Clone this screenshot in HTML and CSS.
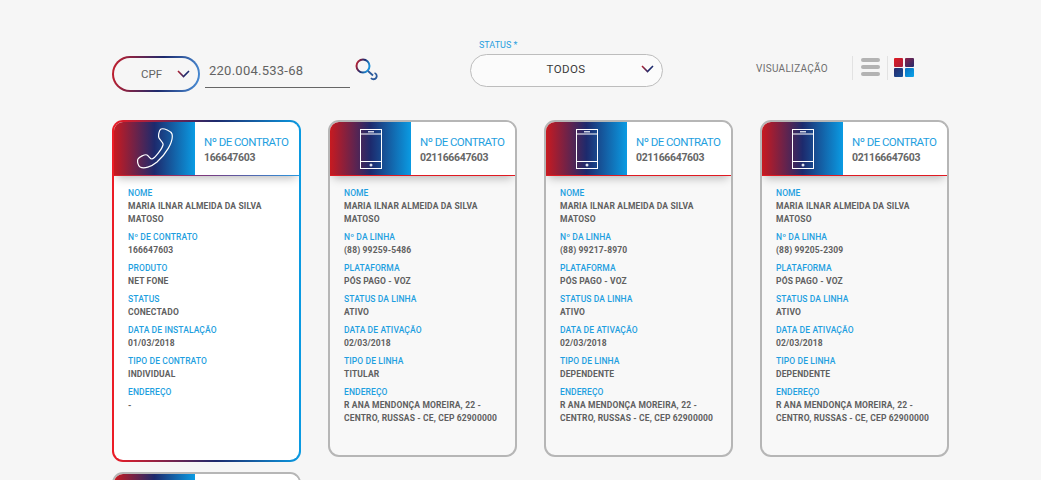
FILE: index.html
```html
<!DOCTYPE html>
<html lang="pt-BR">
<head>
<meta charset="utf-8">
<title>Contratos</title>
<link rel="stylesheet" href="styles.css">
</head>
<body>
<svg class="defs" width="0" height="0" aria-hidden="true">
  <defs>
    <linearGradient id="brand" x1="0" y1="0" x2="1" y2="0.4">
      <stop offset="0" stop-color="#d81f26"/>
      <stop offset=".55" stop-color="#1d2a6d"/>
      <stop offset="1" stop-color="#1a8fd8"/>
    </linearGradient>
    <linearGradient id="chev" x1="0" y1="0" x2="1" y2="0">
      <stop offset="0" stop-color="#b01f2e"/>
      <stop offset=".6" stop-color="#1d2a6d"/>
      <stop offset="1" stop-color="#1d2a6d"/>
    </linearGradient>
    <symbol id="i-handset" viewBox="0 0 36 41">
      <path d="M24 1C27 0 34 3 35 6C37 14 28 27 20 34C14 39 7 41 3 39C1 38 0 33 1 31C2 29 8 26 10 27C12 28 13 31 15 31C18 30 25 21 26 17C27 15 23 12 22 10C21 8 22 2 24 1Z" fill="none" stroke="#fff" stroke-width="1.2"/>
    </symbol>
    <symbol id="i-mobile" viewBox="0 0 22 40">
      <g fill="none" stroke="#fff" stroke-width="1">
        <rect x=".5" y=".5" width="21" height="39"/>
        <path d="M.5 5h21M.5 32.500h21"/>
      </g>
      <rect x="8" y="2" width="6" height="1.500" fill="#cfd3e4"/>
      <circle cx="11" cy="36" r="1.500" fill="#dfe3ee"/>
    </symbol>
  </defs>
</svg>

<header class="toolbar">
  <div class="doc-pill">
    <span class="doc-type">CPF</span>
    <svg class="chev" width="13" height="8" viewBox="0 0 13 8"><path d="M1 1l5.500 5.500L12 1" fill="none" stroke="url(#chev)" stroke-width="1.600"/></svg>
  </div>
  <div class="doc-number">220.004.533-68</div>
  <svg class="search" width="26" height="26" viewBox="0 0 26 26">
    <circle cx="8" cy="8" r="6.500" fill="none" stroke="url(#brand)" stroke-width="2"/>
    <path d="M13 13l5 4.500M19.500 15a3.200 3.200 0 1 1-3.500 5" fill="none" stroke="#2b5a9c" stroke-width="1.800"/>
  </svg>
  <div class="status">
    <span class="status-label">STATUS *</span>
    <div class="status-pill">
      <span class="status-value">TODOS</span>
      <svg class="chev" width="13" height="8" viewBox="0 0 13 8"><path d="M1 1l5.500 5.500L12 1" fill="none" stroke="url(#chev)" stroke-width="1.600"/></svg>
    </div>
  </div>
  <span class="view-label">VISUALIZAÇÃO</span>
  <span class="divider first"></span>
  <span class="list-icon"><i></i><i></i><i></i></span>
  <span class="divider"></span>
  <span class="grid-icon"><i class="q1"></i><i class="q2"></i><i class="q3"></i><i class="q4"></i></span>
</header>

<main class="cards">
  <article class="card selected">
    <div class="card-head">
      <div class="head-icon"><svg class="handset"><use href="#i-handset"/></svg></div>
      <div class="head-text"><span class="head-label">Nº DE CONTRATO</span><strong class="head-value">166647603</strong></div>
    </div>
    <dl class="fields">
      <div><dt>NOME</dt><dd>MARIA ILNAR ALMEIDA DA SILVA MATOSO</dd></div>
      <div><dt>Nº DE CONTRATO</dt><dd>166647603</dd></div>
      <div><dt>PRODUTO</dt><dd>NET FONE</dd></div>
      <div><dt>STATUS</dt><dd>CONECTADO</dd></div>
      <div><dt>DATA DE INSTALAÇÃO</dt><dd>01/03/2018</dd></div>
      <div><dt>TIPO DE CONTRATO</dt><dd>INDIVIDUAL</dd></div>
      <div><dt>ENDEREÇO</dt><dd>-</dd></div>
    </dl>
  </article>

  <article class="card">
    <div class="card-head">
      <div class="head-icon"><svg class="mobile"><use href="#i-mobile"/></svg></div>
      <div class="head-text"><span class="head-label">Nº DE CONTRATO</span><strong class="head-value">021166647603</strong></div>
    </div>
    <dl class="fields">
      <div><dt>NOME</dt><dd>MARIA ILNAR ALMEIDA DA SILVA MATOSO</dd></div>
      <div><dt>Nº DA LINHA</dt><dd>(88) 99259-5486</dd></div>
      <div><dt>PLATAFORMA</dt><dd>PÓS PAGO - VOZ</dd></div>
      <div><dt>STATUS DA LINHA</dt><dd>ATIVO</dd></div>
      <div><dt>DATA DE ATIVAÇÃO</dt><dd>02/03/2018</dd></div>
      <div><dt>TIPO DE LINHA</dt><dd>TITULAR</dd></div>
      <div><dt>ENDEREÇO</dt><dd>R ANA MENDONÇA MOREIRA, 22 - CENTRO, RUSSAS - CE, CEP 62900000</dd></div>
    </dl>
  </article>

  <article class="card">
    <div class="card-head">
      <div class="head-icon"><svg class="mobile"><use href="#i-mobile"/></svg></div>
      <div class="head-text"><span class="head-label">Nº DE CONTRATO</span><strong class="head-value">021166647603</strong></div>
    </div>
    <dl class="fields">
      <div><dt>NOME</dt><dd>MARIA ILNAR ALMEIDA DA SILVA MATOSO</dd></div>
      <div><dt>Nº DA LINHA</dt><dd>(88) 99217-8970</dd></div>
      <div><dt>PLATAFORMA</dt><dd>PÓS PAGO - VOZ</dd></div>
      <div><dt>STATUS DA LINHA</dt><dd>ATIVO</dd></div>
      <div><dt>DATA DE ATIVAÇÃO</dt><dd>02/03/2018</dd></div>
      <div><dt>TIPO DE LINHA</dt><dd>DEPENDENTE</dd></div>
      <div><dt>ENDEREÇO</dt><dd>R ANA MENDONÇA MOREIRA, 22 - CENTRO, RUSSAS - CE, CEP 62900000</dd></div>
    </dl>
  </article>

  <article class="card">
    <div class="card-head">
      <div class="head-icon"><svg class="mobile"><use href="#i-mobile"/></svg></div>
      <div class="head-text"><span class="head-label">Nº DE CONTRATO</span><strong class="head-value">021166647603</strong></div>
    </div>
    <dl class="fields">
      <div><dt>NOME</dt><dd>MARIA ILNAR ALMEIDA DA SILVA MATOSO</dd></div>
      <div><dt>Nº DA LINHA</dt><dd>(88) 99205-2309</dd></div>
      <div><dt>PLATAFORMA</dt><dd>PÓS PAGO - VOZ</dd></div>
      <div><dt>STATUS DA LINHA</dt><dd>ATIVO</dd></div>
      <div><dt>DATA DE ATIVAÇÃO</dt><dd>02/03/2018</dd></div>
      <div><dt>TIPO DE LINHA</dt><dd>DEPENDENTE</dd></div>
      <div><dt>ENDEREÇO</dt><dd>R ANA MENDONÇA MOREIRA, 22 - CENTRO, RUSSAS - CE, CEP 62900000</dd></div>
    </dl>
  </article>

  <article class="card">
    <div class="card-head">
      <div class="head-icon"></div>
      <div class="head-text"></div>
    </div>
  </article>
</main>
</body>
</html>
```
FILE: styles.css
```css
* { box-sizing: border-box; }

html, body {
  height: 480px;
  overflow: hidden;
}

body {
  margin: 0;
  background: #f6f6f6;
  font-family: Roboto, "Liberation Sans", sans-serif;
  color: #636363;
}

.defs { position: absolute; }

.toolbar {
  display: flex;
  align-items: flex-start;
  height: 120px;
  padding: 40px 0 0 112px;
}

.doc-pill {
  display: flex;
  align-items: center;
  width: 88px;
  height: 36px;
  margin-top: 16px;
  padding: 0 8px 0 27px;
  border: 2px solid transparent;
  border-radius: 18px;
  background: linear-gradient(#f6f6f6, #f6f6f6) padding-box,
    linear-gradient(100deg, #c81e2a 0%, #1d2a6d 55%, #4a90d9 100%) border-box;
}

.doc-type {
  flex: 1;
  font-size: 11.500px;
  letter-spacing: 0;
}

.doc-number {
  width: 145px;
  height: 32px;
  margin: 16px 0 0 5px;
  padding: 6px 0 0 4px;
  border-bottom: 1px solid #666;
  font-size: 13px;
  letter-spacing: .25px;
  line-height: 18px;
}

.search {
  margin: 18px 0 0 5px;
}

.status {
  display: flex;
  flex-direction: column;
  width: 193px;
  margin-left: 89px;
}

.status-label {
  height: 14px;
  padding-left: 9px;
  color: #2a9fdf;
  font-size: 9px;
  line-height: 11px;
  letter-spacing: 0;
}

.status-pill {
  display: flex;
  align-items: center;
  height: 33px;
  padding: 0 8px 3px 0;
  border: 1px solid #bdbdbd;
  border-radius: 17px;
  background: #fbfbfb;
}

.status-value {
  flex: 1;
  padding-left: 20px;
  color: #3a3a3a;
  font-size: 11.500px;
  letter-spacing: .4px;
  text-align: center;
}

.view-label {
  margin: 23px 0 0 93px;
  color: #6e6e6e;
  font-size: 10px;
  line-height: 12px;
  letter-spacing: .3px;
}

.divider {
  width: 1px;
  height: 24px;
  margin: 16px 0 0 7px;
  background: #e2e2e2;
}

.divider.first { margin-left: 24px; }

.list-icon {
  display: flex;
  flex-direction: column;
  gap: 3px;
  width: 19px;
  margin: 18px 0 0 8px;
}

.list-icon i {
  display: block;
  height: 4px;
  border-radius: 2px;
  background: #b3b3b3;
}

.grid-icon {
  display: grid;
  grid-template-columns: 9px 9px;
  gap: 1px 2px;
  margin: 18px 0 0 6px;
}

.grid-icon i { display: block; height: 9px; border-radius: 1px; }
.q1 { background: linear-gradient(135deg, #e01a22, #a51f3c); }
.q2 { background: linear-gradient(135deg, #8a2148, #232a6c); }
.q3 { background: linear-gradient(135deg, #2a2a6a, #14509a); }
.q4 { background: linear-gradient(135deg, #0a6fc0, #0aa5ea); }

.cards {
  display: grid;
  grid-template-columns: repeat(4, 189px);
  align-items: start;
  column-gap: 27px;
  row-gap: 10px;
  padding-left: 112px;
}

.card {
  height: 337px;
  overflow: hidden;
  border: 2px solid #b6b6b6;
  border-radius: 11px;
  background: #f8f8f8;
}

.card.selected {
  height: 342px;
  border-color: transparent;
  background: linear-gradient(#fff, #fff) padding-box,
    linear-gradient(90deg, #ee1c25 0%, #1d2a6d 55%, #0a9be3 100%) border-box;
}

.card-head {
  display: flex;
  height: 54px;
  border-bottom: 1px solid #e01a22;
  background: #fff;
  box-shadow: 0 5px 9px -3px rgba(0, 0, 0, .28);
}

.selected .card-head {
  border-bottom: 0;
  background: linear-gradient(#fff, #fff) top / 100% 53px no-repeat,
    linear-gradient(90deg, #d81f26 0%, #7a3a80 50%, #2a97e0 100%);
}

.head-icon {
  display: flex;
  flex: none;
  align-items: center;
  justify-content: center;
  width: 81px;
  height: 53px;
  background: linear-gradient(90deg, #c81a20 0%, #1d2a6d 50%, #0a9be3 100%);
}

.handset { width: 36px; height: 41px; }
.mobile { width: 22px; height: 40px; }

.head-text {
  display: flex;
  flex-direction: column;
  min-width: 0;
  padding: 12px 0 0 9px;
}

.head-label {
  color: #1f9fe0;
  font-size: 11.500px;
  line-height: 16px;
  letter-spacing: -.55px;
  white-space: nowrap;
}

.head-value {
  color: #666;
  font-size: 10.500px;
  line-height: 16px;
  letter-spacing: -.35px;
}

.fields {
  display: flex;
  flex-direction: column;
  gap: 5px;
  margin: 0;
  padding: 11px 12px 0 14px;
}

.fields dt {
  color: #1f9fe0;
  font-size: 8.500px;
  font-weight: 500;
  line-height: 13px;
  letter-spacing: .1px;
}

.fields dd {
  margin: 0;
  color: #606060;
  font-size: 8.500px;
  font-weight: 700;
  line-height: 13px;
  letter-spacing: .15px;
}
```
